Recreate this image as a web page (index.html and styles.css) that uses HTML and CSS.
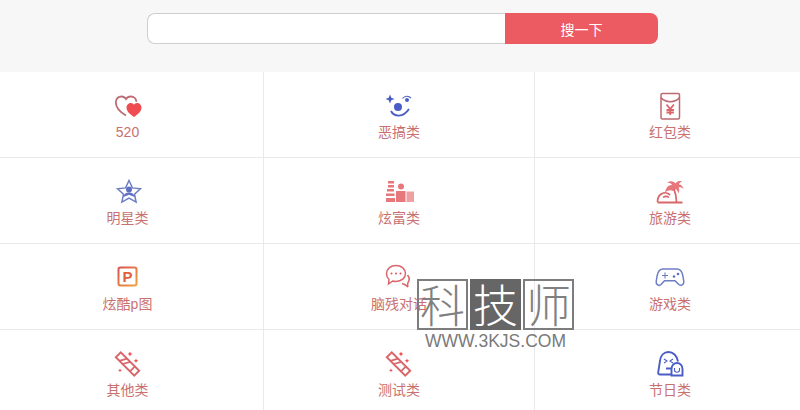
FILE: index.html
```html
<!DOCTYPE html>
<html>
<head>
    <title>搜一下</title>
    <link rel="stylesheet" href="styles.css">
</head>
<body>
    <div class="search-bar">
        <form class="search-box">
            <input class="search-input" type="text">
            <button class="search-btn" type="button">搜一下</button>
        </form>
    </div>

    <div class="grid">
        <a class="cell">
            <svg class="icon" viewBox="0 0 30 30">
                <path class="line-dark mid" d="M13 25.500C8 22.500 2.800 18 2.800 12.200 2.800 8.600 5.500 6.500 8.400 6.500c2 0 3.600 1 4.600 2.600 1-1.600 2.800-2.600 4.800-2.600 3 0 5.400 2 5.600 5.200"/>
                <path class="fill-red" d="M21 27c-4-3-7.500-5.500-7.500-9.500 0-2.500 2.200-4.500 4.500-4.500 1.300 0 2.400.7 3 1.800.6-1.100 1.700-1.800 3-1.800 2.300 0 4.500 2 4.500 4.500 0 4-3.500 6.500-7.500 9.500z"/>
            </svg>
            <span class="label">520</span>
        </a>
        <a class="cell">
            <svg class="icon" viewBox="0 0 30 30">
                <path class="fill-blue" d="M6 4.500l1.300 3.200L10.500 9 7.300 10.300 6 13.500 4.700 10.300 1.500 9l3.200-1.300z"/>
                <circle class="fill-blue" cx="14" cy="17" r="4"/>
                <path class="line-blue" d="M7 21c3 6 12 7 18-2"/>
                <circle class="fill-blue" cx="23" cy="10" r="2"/>
                <path class="line-blue thin" d="M18.500 8.500c2.500-3 6-3 8.500-.5"/>
            </svg>
            <span class="label">恶搞类</span>
        </a>
        <a class="cell">
            <svg class="icon" viewBox="0 0 30 30">
                <rect class="line-dark" x="6" y="3.500" width="18.500" height="25.500" rx="1.500"/>
                <path class="line-dark" d="M6 7.500c4 5.500 14.500 5.500 18.500 0"/>
                <path class="line-red mid" d="M11.500 14.500l3.700 4.500 3.700-4.500M15.200 19v6M11.500 20h7.400M11.500 22.500h7.400"/>
            </svg>
            <span class="label">红包类</span>
        </a>

        <a class="cell">
            <svg class="icon" viewBox="0 0 30 30">
                <path class="line-soft" d="M16 4.500l3.400 7.400 8 .9-5.900 5.400 1.600 7.900-7.100-4-7.100 4 1.600-7.900-5.900-5.400 8-.9z"/>
                <circle class="fill-soft" cx="16" cy="13.500" r="3"/>
                <path class="fill-soft" d="M10.500 21c.5-3.500 3-4.500 5.500-4.500s5 1 5.500 4.500l-5.500-2.200z"/>
            </svg>
            <span class="label">明星类</span>
        </a>
        <a class="cell">
            <svg class="icon" viewBox="0 0 30 30">
                <path class="fill-pink" d="M4 5h6v2.500H4zM4 9h6v2.500H4zM3 13h7v2.500H3zM2 17.500h8.500V20H2zM2 22h9v4H2z"/>
                <circle class="fill-pink" cx="17" cy="10.500" r="3"/>
                <path class="fill-pink" d="M12 15h9.500v11H12z"/>
                <path class="fill-pale" d="M22.500 15.500H30V26h-7.500z"/>
            </svg>
            <span class="label">炫富类</span>
        </a>
        <a class="cell">
            <svg class="icon" viewBox="0 0 30 30">
                <path class="line-red mid" d="M2.500 26c0-3 .5-5.500 3-7.500 3-2.300 7-2 9.500.5M2.500 26.500h25"/>
                <path class="line-red" d="M8 21.500c2-1.500 4-1.500 6 0"/>
                <path class="fill-pink" d="M18 15c-2-1.500-6.500-1-8 2 .5-4.500 3-8 7-8-1-2-3-2.500-5-2 2.500-2.500 6.500-2 8.500.5 1-2 3.500-3 6.500-2-1.500.5-3 1.500-3 3 2 0 4 1.500 4.500 4.500-1.500-1.500-3-2-5-1.500 1 1.500 1 3.500 0 6-.5-1.500-1-3-2.500-4.500z"/>
                <path class="line-red mid" d="M19 13c1.500 4 2.500 8 2.500 13"/>
            </svg>
            <span class="label">旅游类</span>
        </a>

        <a class="cell">
            <svg class="icon" viewBox="0 0 30 30">
                <defs>
                    <linearGradient id="p-edge" x1="0" y1="0" x2="1" y2="1">
                        <stop offset="0" stop-color="#d9534f"/>
                        <stop offset="1" stop-color="#f0a040"/>
                    </linearGradient>
                </defs>
                <rect class="p-frame" x="5.500" y="5.500" width="18" height="18" rx="2"/>
                <text class="p-letter" x="14.500" y="20">P</text>
            </svg>
            <span class="label">炫酷p图</span>
        </a>
        <a class="cell">
            <svg class="icon" viewBox="0 0 30 30">
                <path class="line-red" d="M18 21.500c2 .5 4.500 2 6 3.500-.5-1.500-.5-3 0-4.500 1.500-2 1.500-5-.5-7.500"/>
                <path class="line-red" d="M12 3.500c5.500 0 9.500 3.500 9.500 8s-4 8-9.500 8c-1.200 0-2.300-.2-3.300-.5L4.500 22l.5-4.500c-1.600-1.500-2.500-3.600-2.500-6 0-4.500 4-8 9.500-8z"/>
                <circle class="fill-red" cx="7.500" cy="11.500" r="1"/>
                <circle class="fill-red" cx="12" cy="11.500" r="1"/>
                <circle class="fill-red" cx="16.500" cy="11.500" r="1"/>
            </svg>
            <span class="label">脑残对话</span>
        </a>
        <a class="cell">
            <svg class="icon" viewBox="0 0 30 30">
                <path class="line-soft" d="M8 7h14c3.500 0 5 2.500 5.800 6.500l1 6c.4 3-2.800 5-5 3l-3.800-3.800H9.500L6 22.500c-2 2-5.300 0-4.800-3l1-6C3 9.500 4.500 7 8 7z"/>
                <path class="line-soft thin" d="M7 13.500h6M10 10.500v6"/>
                <circle class="fill-soft" cx="19" cy="14.500" r="1.300"/>
                <circle class="fill-soft" cx="23" cy="12" r="1.300"/>
            </svg>
            <span class="label">游戏类</span>
        </a>

        <a class="cell">
            <svg class="icon" viewBox="0 0 30 30">
                <g transform="rotate(-45 14.500 16)">
                    <rect class="line-red wide" x="11" y="3" width="7" height="26"/>
                    <path class="line-red mid" d="M11 23h7M11 8l7 4M11 12.500l7 4"/>
                </g>
                <path class="fill-red" d="M17 3.500l.8 1.700 1.700.8-1.700.8-.8 1.700-.8-1.700-1.700-.8 1.700-.8zM23 10.500l.7 1.500 1.500.7-1.500.7-.7 1.500-.7-1.500-1.500-.7 1.500-.7zM7 20.500l.6 1.300 1.300.6-1.300.6-.6 1.300-.6-1.300-1.300-.6 1.300-.6z"/>
            </svg>
            <span class="label">其他类</span>
        </a>
        <a class="cell">
            <svg class="icon" viewBox="0 0 30 30">
                <g transform="rotate(-45 14.500 16)">
                    <rect class="line-red wide" x="11" y="3" width="7" height="26"/>
                    <path class="line-red mid" d="M11 23h7M11 8l7 4M11 12.500l7 4"/>
                </g>
                <path class="fill-red" d="M17 3.500l.8 1.700 1.700.8-1.700.8-.8 1.700-.8-1.700-1.700-.8 1.700-.8zM23 10.500l.7 1.500 1.500.7-1.500.7-.7 1.500-.7-1.500-1.500-.7 1.500-.7zM7 20.500l.6 1.300 1.300.6-1.300.6-.6 1.300-.6-1.300-1.300-.6 1.300-.6z"/>
            </svg>
            <span class="label">测试类</span>
        </a>
        <a class="cell">
            <svg class="icon" viewBox="0 0 30 30">
                <path class="line-blue" d="M16 26.500H5c-1.200 0-2-1-1.800-2.200L5 13C5.500 7.500 9 4 13.500 4s8.500 3.500 9.500 9.500"/>
                <path class="line-blue thin" d="M9 11l3 2-3 2M18 11l-3 2 3 2"/>
                <path class="fill-blue" d="M11 19.500h5v2h-5z"/>
                <path class="line-blue" d="M16.500 27.500v-6.500c0-3.500 2.500-6 5.500-6s5.500 2.500 5.500 6v6.500z"/>
                <path class="line-blue thin" d="M19.500 20v2c0 3 5 3 5 0v-2"/>
            </svg>
            <span class="label">节日类</span>
        </a>
    </div>

    <div class="watermark">
        <div class="wm-chars">
            <span class="wm-char">科</span>
            <span class="wm-char dark">技</span>
            <span class="wm-char">师</span>
        </div>
        <div class="wm-url">WWW.3KJS.COM</div>
    </div>
</body>
</html>
```

FILE: styles.css
```css
html, body {
    margin: 0;
    height: 410px;
    overflow: hidden;
    background: #fff;
}
body {
    font-family: "Liberation Sans", "Noto Sans CJK SC", sans-serif;
    font-size: 14px;
    position: relative;
}

/* search */
.search-bar {
    height: 72px;
    box-sizing: border-box;
    padding: 13px 0 0 147px;
    background: #f7f7f7;
}
.search-box {
    display: flex;
    width: 511px;
    height: 31px;
    margin: 0;
}
.search-input {
    width: 358px;
    box-sizing: border-box;
    border: 1px solid #cfcfcf;
    border-right: none;
    border-radius: 8px 0 0 8px;
    background: #fff;
    outline: none;
}
.search-btn {
    flex: 1;
    border: none;
    border-radius: 0 8px 8px 0;
    background: #ec5a62;
    color: #fff;
    font-family: inherit;
    font-size: 14px;
    padding: 0;
}

/* grid */
.grid {
    display: grid;
    grid-template-columns: 264px 271px 265px;
    grid-auto-rows: 86px;
}
.cell {
    display: flex;
    flex-direction: column;
    align-items: center;
    box-sizing: border-box;
    padding-top: 18px;
    border-bottom: 1px solid #e9e9e9;
    border-right: 1px solid #e9e9e9;
}
.cell:nth-child(3n+1) {
    padding-right: 8px;
}
.cell:nth-child(3n) {
    border-right: none;
    padding-left: 5px;
}
.icon {
    width: 30px;
    height: 30px;
}
.label {
    margin-top: 2px;
    line-height: 20px;
    color: #c9716f;
}

/* icon strokes */
.icon path, .icon rect {
    fill: none;
    stroke-width: 1.5;
}
.line-dark { stroke: #bd6a72; }
.line-red { stroke: #d9666a; }
.line-blue { stroke: #4a5cc6; }
.line-soft { stroke: #6d7ec6; }
.icon .line-blue { stroke-width: 1.9; }
.icon .thin { stroke-width: 1.1; }
.icon .mid { stroke-width: 1.8; }
.icon .wide { stroke-width: 2; }
.icon .fill-red { fill: #ee4c50; stroke: none; }
.icon .fill-blue { fill: #4a5cc6; stroke: none; }
.icon .fill-soft { fill: #5f70c2; stroke: none; }
.icon .fill-pink { fill: #e8777b; stroke: none; }
.icon .fill-pale { fill: #f0a0a2; stroke: none; }
.icon .p-frame { stroke: url(#p-edge); stroke-width: 2; }
.p-letter {
    font-family: "Liberation Sans", sans-serif;
    font-size: 15px;
    font-weight: bold;
    text-anchor: middle;
    fill: #e2603c;
}

/* watermark */
.watermark {
    position: absolute;
    left: 417px;
    top: 279px;
    width: 157px;
}
.wm-chars {
    display: flex;
    justify-content: space-between;
}
.wm-char {
    width: 51px;
    height: 51px;
    box-sizing: border-box;
    border: 2px solid #7d7d7d;
    color: #808080;
    font-family: "Noto Sans CJK SC", sans-serif;
    font-size: 45px;
    font-weight: 200;
    line-height: 45px;
    text-align: center;
}
.wm-char.dark {
    background: #666;
    border-color: #666;
    color: #fff;
}
.wm-url {
    margin-top: 1px;
    font-size: 17.500px;
    line-height: 20px;
    color: #7a7a7a;
    text-align: center;
    white-space: nowrap;
}
```
